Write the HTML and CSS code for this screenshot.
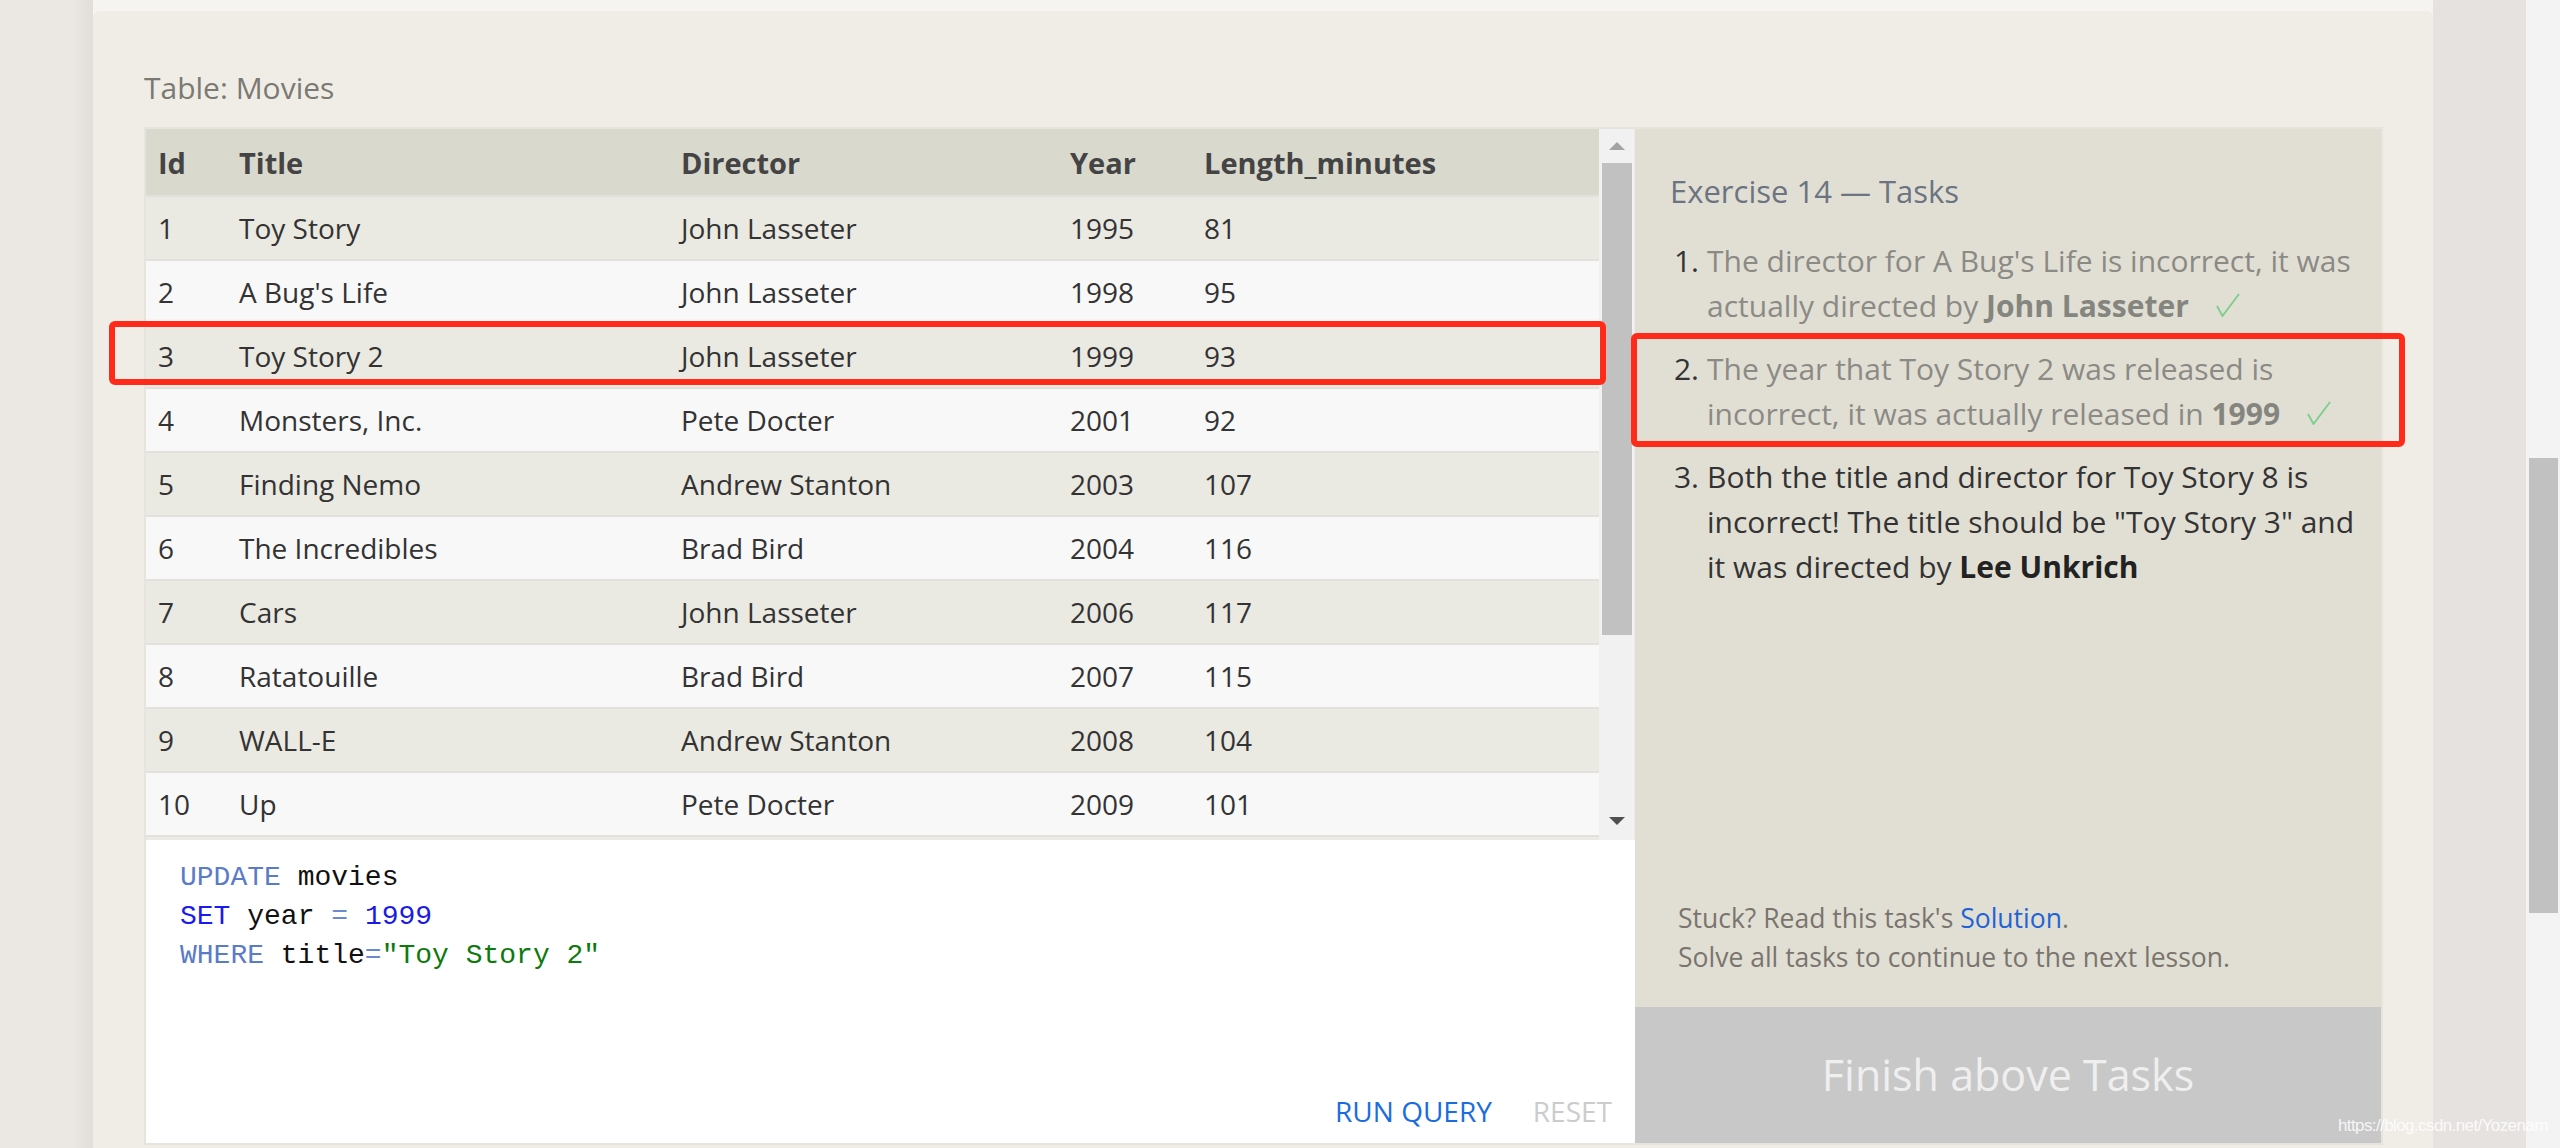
FILE: index.html
```html
<!DOCTYPE html>
<html lang="en">
<head>
<meta charset="utf-8">
<title>SQLBolt - Exercise 14</title>
<link rel="stylesheet" href="styles.css">
</head>
<body>
<div class="page">
  <div class="gutter-left"></div>
  <div class="column">
    <main class="card">
      <div class="table-label">Table: Movies</div>
      <div class="workspace">
        <div class="left">
          <div class="table-area">
            <div class="table-scroll" role="table">
              <div class="row head" role="row"><span>Id</span><span>Title</span><span>Director</span><span>Year</span><span>Length_minutes</span></div>
              <div class="row" role="row"><span>1</span><span>Toy Story</span><span>John Lasseter</span><span>1995</span><span>81</span></div>
              <div class="row" role="row"><span>2</span><span>A Bug's Life</span><span>John Lasseter</span><span>1998</span><span>95</span></div>
              <div class="row" role="row"><span>3</span><span>Toy Story 2</span><span>John Lasseter</span><span>1999</span><span>93</span></div>
              <div class="row" role="row"><span>4</span><span>Monsters, Inc.</span><span>Pete Docter</span><span>2001</span><span>92</span></div>
              <div class="row" role="row"><span>5</span><span>Finding Nemo</span><span>Andrew Stanton</span><span>2003</span><span>107</span></div>
              <div class="row" role="row"><span>6</span><span>The Incredibles</span><span>Brad Bird</span><span>2004</span><span>116</span></div>
              <div class="row" role="row"><span>7</span><span>Cars</span><span>John Lasseter</span><span>2006</span><span>117</span></div>
              <div class="row" role="row"><span>8</span><span>Ratatouille</span><span>Brad Bird</span><span>2007</span><span>115</span></div>
              <div class="row" role="row"><span>9</span><span>WALL-E</span><span>Andrew Stanton</span><span>2008</span><span>104</span></div>
              <div class="row" role="row"><span>10</span><span>Up</span><span>Pete Docter</span><span>2009</span><span>101</span></div>
            </div>
            <div class="vscroll">
              <div class="arrow"><svg width="16" height="8" viewBox="0 0 16 8"><polygon points="8,0 16,8 0,8" fill="#a3a3a3"/></svg></div>
              <div class="thumb"></div>
              <div class="arrow arrow-down"><svg width="16" height="8" viewBox="0 0 16 8"><polygon points="0,0 16,0 8,8" fill="#505050"/></svg></div>
            </div>
          </div>
          <div class="editor">
<pre class="code"><span class="kw">UPDATE</span> movies
<span class="kw2">SET</span> year <span class="op">=</span> <span class="num">1999</span>
<span class="kw">WHERE</span> title<span class="op">=</span><span class="str">"Toy Story 2"</span></pre>
            <div class="editor-actions">
              <span class="run">RUN QUERY</span>
              <span class="reset">RESET</span>
            </div>
          </div>
        </div>
        <aside class="tasks">
          <div class="tasks-body">
            <h2 class="tasks-title">Exercise 14 — Tasks</h2>
            <ol class="task-list">
              <li class="done"><span class="n">1.</span><span class="t">The director for A Bug's Life is incorrect, it was actually directed by <b>John Lasseter</b><svg class="check" width="24" height="24" viewBox="0 0 24 24"><polyline points="1,13 6.5,23 23,1" fill="none" stroke="#7ccf8c" stroke-width="1.9"/></svg></span></li>
              <li class="done"><span class="n">2.</span><span class="t">The year that Toy Story 2 was released is incorrect, it was actually released in <b>1999</b><svg class="check" width="24" height="24" viewBox="0 0 24 24"><polyline points="1,13 6.5,23 23,1" fill="none" stroke="#7ccf8c" stroke-width="1.9"/></svg></span></li>
              <li><span class="n">3.</span><span class="t">Both the title and director for Toy Story 8 is incorrect! The title should be "Toy Story 3" and it was directed by <b>Lee Unkrich</b></span></li>
            </ol>
          </div>
          <div class="tasks-footer">
            <p>Stuck? Read this task's <a href="#">Solution</a>.</p>
            <p>Solve all tasks to continue to the next lesson.</p>
          </div>
          <div class="finish">Finish above Tasks</div>
        </aside>
      </div>
    </main>
  </div>
  <div class="gutter-right"></div>
  <div class="browser-scroll"><div class="bthumb"></div></div>
</div>
<div class="annot annot-row"></div>
<div class="annot annot-task"></div>
<div class="watermark">https://blog.csdn.net/Yozenam</div>
</body>
</html>
```
FILE: styles.css
```css
* { box-sizing: border-box; }
html, body { margin: 0; padding: 0; }
body {
  width: 2560px;
  height: 1148px;
  overflow: hidden;
  position: relative;
  background: #e9e5e2;
  font-family: "Open Sans", "Noto Sans", sans-serif;
  color: #333;
}
.page { display: flex; height: 1148px; }
.gutter-left {
  width: 93px; flex: none;
  background: linear-gradient(to right, #ebe7e3 0, #ebe7e3 72px, #e1ddd9 93px);
}
.column {
  width: 2340px; flex: none;
  background: #f5f4f0;
  padding-top: 11px;
}
.card {
  background: #efede6;
  border-radius: 6px 6px 0 0;
  height: 1137px;
  padding: 57px 50px 0 51px;
}
.table-label {
  font-size: 30px;
  line-height: 40px;
  height: 40px;
  color: #7b7974;
  margin-bottom: 19px;
}
.workspace {
  display: flex;
  height: 1018px;
  border: 2px solid #e6e4dd;
}
.left { width: 1489px; flex: none; display: flex; flex-direction: column; }
.table-area {
  height: 711px;
  display: flex;
  background: #ebeae4;
  overflow: hidden;
}
.table-scroll { flex: 1; overflow: hidden; }
.row {
  display: grid;
  grid-template-columns: 81px 442px 389px 134px 1fr;
  align-items: center;
  height: 64px;
  border-bottom: 2px solid #e2e1db;
  font-size: 28px;
  color: #333;
  background: #f8f8f8;
}
.row > span { padding-left: 12px; white-space: nowrap; }
.row:nth-child(even) { background: #eae9e2; }
.row.head {
  height: 68px;
  background: #d9d9ce;
  font-weight: 700;
  font-size: 29px;
  color: #444;
}
.vscroll {
  width: 35px; flex: none;
  background: #f1f1f1;
  display: flex;
  flex-direction: column;
  margin-right: 1px;
}
.arrow { height: 34px; display: flex; align-items: center; justify-content: center; }
.arrow-down { margin-top: auto; margin-bottom: 2px; }
.thumb { height: 472px; margin: 0 2px 0 3px; background: #c1c1c1; }

.editor {
  height: 303px;
  background: #fff;
  display: flex;
  flex-direction: column;
}
.code {
  margin: 0;
  padding: 18px 34px 0;
  font-family: "Liberation Mono", "DejaVu Sans Mono", monospace;
  font-size: 28px;
  line-height: 39px;
  color: #111;
}
.kw { color: #5a7bc7; }
.kw2 { color: #1a1af0; }
.op { color: #6a8ad0; }
.num { color: #1a1ae6; }
.str { color: #0c7a0c; }
.editor-actions {
  margin-top: auto;
  display: flex;
  justify-content: flex-end;
  gap: 41px;
  padding: 0 23px 15px 0;
  font-size: 28px;
  line-height: 34px;
}
.run { color: #1a6de0; }
.reset { color: #cccccc; }

.tasks {
  flex: 1;
  background: #e1dfd4;
  display: flex;
  flex-direction: column;
}
.tasks-body { padding: 42px 14px 0 35px; }
.tasks-title {
  margin: 0 0 27px;
  font-size: 31px;
  line-height: 40px;
  font-weight: 400;
  color: #6c7482;
}
.task-list { list-style: none; margin: 0; padding: 0; }
.task-list li {
  display: flex;
  font-size: 30px;
  line-height: 45px;
  color: #333;
  margin-bottom: 18px;
}
.task-list .n { width: 37px; flex: none; text-align: right; padding-right: 8px; color: #333; }
.task-list .t { flex: 1; }
.task-list b { font-weight: 700; color: #222; }
.task-list li.done .t { color: #8b8a85; }
.task-list li.done b { color: #858580; }
.check { margin-left: 27px; vertical-align: baseline; }
.tasks-footer {
  margin-top: auto;
  padding: 0 20px 30px 43px;
  font-size: 26.5px;
  line-height: 39px;
  color: #7a746e;
}
.tasks-footer p { margin: 0; }
.tasks-footer a { color: #1f63d6; text-decoration: none; }
.finish {
  height: 136px;
  background: #c8c8c8;
  color: #efefef;
  font-size: 43px;
  line-height: 136px;
  text-align: center;
}

.gutter-right { width: 93px; flex: none; background: #e6e2df; }
.browser-scroll { flex: 1; background: #f3f3f3; padding-top: 458px; }
.bthumb { height: 455px; margin: 0 2px 0 3px; background: #c1c1c1; }

.annot {
  position: absolute;
  border: 6px solid #ff2a1a;
  border-radius: 6px;
}
.annot-row { left: 109px; top: 321px; width: 1497px; height: 64px; }
.annot-task { left: 1631px; top: 333px; width: 774px; height: 114px; }
.watermark {
  position: absolute;
  left: 2338px;
  top: 1116px;
  font-family: "Liberation Sans", sans-serif;
  font-size: 17px;
  letter-spacing: -0.6px;
  color: rgba(255, 255, 255, 0.85);
}
```
